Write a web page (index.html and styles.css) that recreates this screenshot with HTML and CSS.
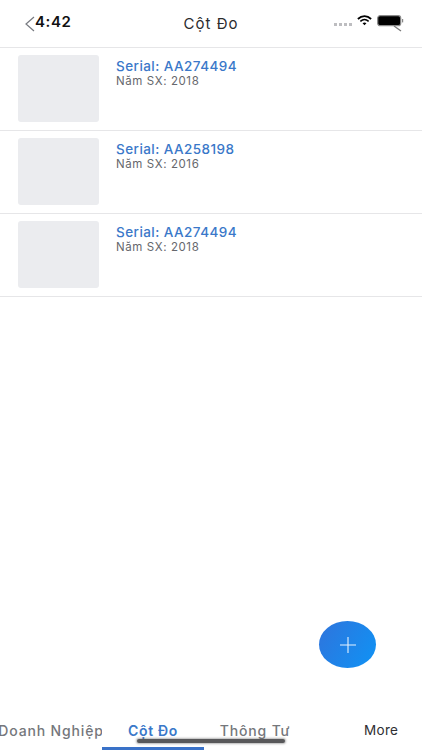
FILE: index.html
```html
<!DOCTYPE html>
<html lang="vi">
<head>
<meta charset="utf-8">
<title>Cột Đo</title>
<link rel="stylesheet" href="styles.css">
</head>
<body>
<div class="app">
  <header class="header">
    <div class="head-left">
      <svg class="back" width="11" height="16" viewBox="0 0 11 16"><path d="M10 1 L2 8 L10 15" fill="none" stroke="#777a80" stroke-width="1.2"/></svg>
      <span class="time">4:42</span>
    </div>
    <h1 class="title">Cột Đo</h1>
    <div class="status">
      <span class="dots"><i></i><i></i><i></i><i></i></span>
      <svg width="15" height="13" viewBox="0 0 17 13"><path d="M1 4.8 C5.5 .6 11.5 .6 16 4.8" fill="none" stroke="#000" stroke-width="2"/><path d="M3.8 7.4 C6.6 5 10.4 5 13.2 7.4" fill="none" stroke="#000" stroke-width="1.8"/><path d="M6.3 9.6 L8.5 12 L10.7 9.6 C9.4 8.5 7.6 8.5 6.3 9.6Z" fill="#000"/></svg>
      <svg width="27" height="18" viewBox="0 0 27 18"><rect x=".7" y="1.7" width="23" height="10" rx="2.5" fill="#000" stroke="#8b8b8b" stroke-width="1.2"/><rect x="25" y="5" width="1.2" height="3.4" fill="#888"/><path d="M17 12 L24 17" stroke="#777" stroke-width="1.2"/></svg>
    </div>
  </header>
  <main class="list">
    <article class="row">
      <div class="thumb"></div>
      <div class="info"><div class="serial">Serial: AA274494</div><div class="year">Năm SX: 2018</div></div>
    </article>
    <article class="row">
      <div class="thumb"></div>
      <div class="info"><div class="serial">Serial: AA258198</div><div class="year">Năm SX: 2016</div></div>
    </article>
    <article class="row">
      <div class="thumb"></div>
      <div class="info"><div class="serial">Serial: AA274494</div><div class="year">Năm SX: 2018</div></div>
    </article>
  </main>
  <button class="fab" aria-label="Thêm"><svg width="18" height="18" viewBox="0 0 18 18"><path d="M9 1V17M1 9H17" stroke="#e6f3ff" stroke-width="1.1"/></svg></button>
  <nav class="tabs">
    <div class="tab"><span>Doanh Nghiệp</span></div>
    <div class="tab active"><span>Cột Đo</span></div>
    <div class="tab"><span>Thông Tư</span></div>
    <div class="tab more"><span>More</span></div>
  </nav>
  <div class="home"></div>
</div>
</body>
</html>
```
FILE: styles.css
```css
* { box-sizing: border-box; }
html, body { margin: 0; padding: 0; }
body { background: #fff; font-family: "Inter", "Liberation Sans", sans-serif; }
.app { position: relative; width: 422px; height: 750px; overflow: hidden; display: flex; flex-direction: column; background: #fff; }
.header { height: 48px; flex: none; display: grid; grid-template-columns: 1fr auto 1fr; align-items: start; border-bottom: 1px solid #e6e6e8; }
.head-left { display: flex; align-items: flex-start; padding: 13px 0 0 24px; }
.back { margin-top: 3px; }
.time { font-size: 15px; font-weight: 600; color: #111; line-height: 17px; letter-spacing: .6px; }
.title { margin: 15px 0 0; font-size: 15px; font-weight: 400; color: #2b2b2e; line-height: 18px; letter-spacing: 1.05px; }
.status { display: flex; align-items: flex-start; justify-content: flex-end; gap: 5px; padding: 14px 18px 0 0; }
.dots { display: flex; gap: 1.5px; margin: 9px 0 0 0; }
.dots i { width: 3.5px; height: 3px; background: #bdbdc0; display: block; }
.list { flex: 1; }
.row { height: 83px; display: flex; padding: 7px 0 0 18px; gap: 17px; border-bottom: 1px solid #e6e6e8; }
.thumb { width: 81px; height: 67px; border-radius: 3px; background: #ebecef; }
.info { padding-top: 3px; }
.serial { font-size: 13.5px; line-height: 17px; color: #3a78c9; font-weight: 500; letter-spacing: .45px; }
.year { font-size: 11.5px; line-height: 13px; color: #66686d; letter-spacing: .6px; }
.fab { position: absolute; left: 319px; top: 621px; width: 57px; height: 47px; border: 0; padding: 0; border-radius: 50%; background: linear-gradient(120deg, #2f74dc, #0f93f5); display: flex; align-items: center; justify-content: center; }
.tabs { height: 40px; flex: none; display: flex; }
.tab { width: 102px; height: 40px; overflow: hidden; display: flex; justify-content: center; padding-top: 12px; font-size: 14px; line-height: 17px; font-weight: 500; color: #75777c; letter-spacing: .85px; white-space: nowrap; }
.active { color: #3a78c9; font-weight: 600; letter-spacing: .65px; border-bottom: 3px solid #3a72c8; }
.more { flex: 1; justify-content: flex-start; padding-left: 58px; color: #2f2f33; font-weight: 400; font-size: 13.5px; letter-spacing: .3px; }
.home { position: absolute; left: 137px; top: 739px; width: 148px; height: 4px; border-radius: 2px; background: #58585a; box-shadow: 0 0 2px 1px rgba(90, 90, 92, .45); }
```
